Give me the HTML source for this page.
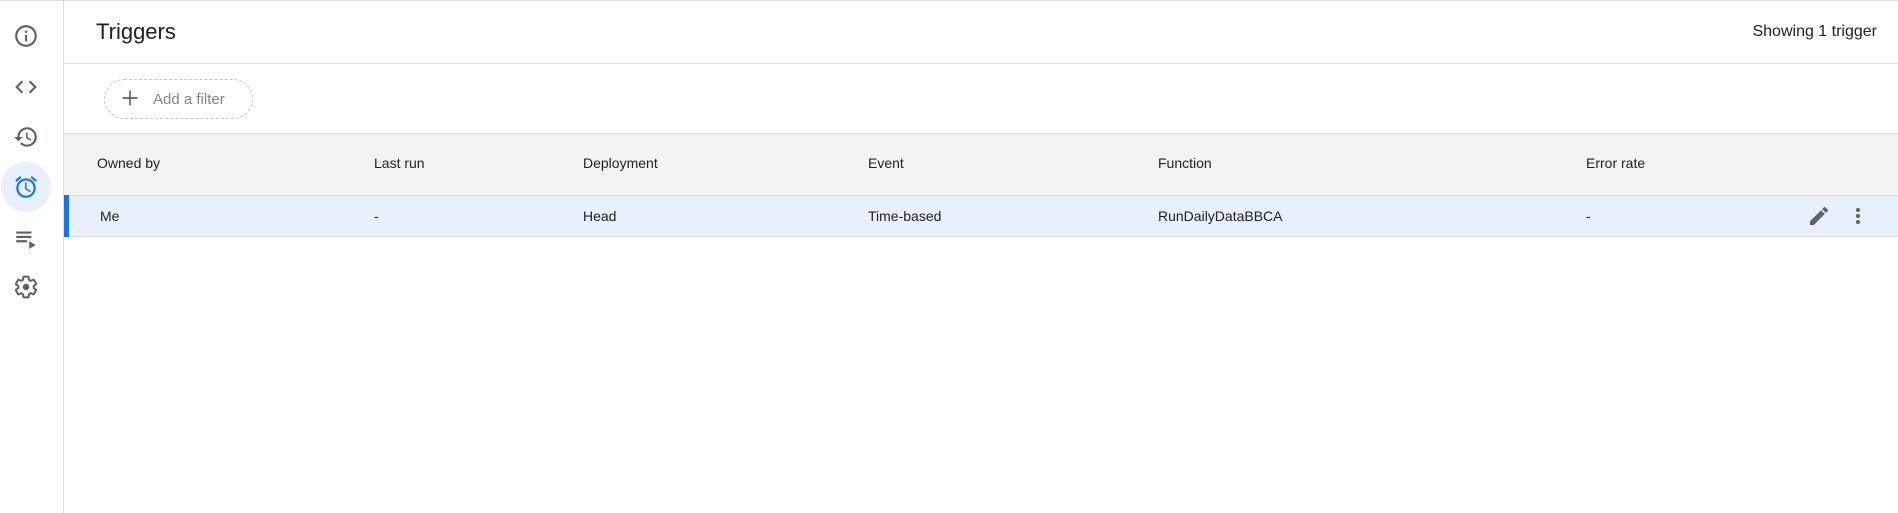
<!DOCTYPE html>
<html><head><style>
body{margin:0;width:1898px;height:513px;background:#fff;font-family:"Liberation Sans",sans-serif;position:relative;overflow:hidden;color:#202124}
.a{position:absolute}
svg.i{position:absolute;width:26px;height:26px;fill:#5f6368}
.h{position:absolute;top:155px;font-size:14px;color:#202124}
.r{position:absolute;top:208px;font-size:14px;color:#202124}
</style></head><body>
<div class="a" style="left:0;top:0;width:1898px;height:1px;background:#dadce0"></div>
<div class="a" style="left:63px;top:0;width:1px;height:513px;background:#dadce0"></div>
<div class="a" style="left:1px;top:162px;width:50px;height:50px;border-radius:50%;background:#e8f0fe"></div>
<svg class="i" style="left:13px;top:23px" viewBox="0 0 24 24"><path d="M11 7h2v2h-2zm0 4h2v6h-2zm1-9C6.48 2 2 6.48 2 12s4.48 10 10 10 10-4.48 10-10S17.52 2 12 2zm0 18c-4.41 0-8-3.59-8-8s3.59-8 8-8 8 3.59 8 8-3.59 8-8 8z"/></svg>
<svg class="i" style="left:13px;top:74px" viewBox="0 0 24 24"><path d="M9.4 16.6L4.8 12l4.6-4.6L8 6l-6 6 6 6 1.4-1.4zm5.2 0l4.6-4.6-4.6-4.6L16 6l6 6-6 6-1.4-1.4z"/></svg>
<svg class="i" style="left:13px;top:124px" viewBox="0 0 24 24"><path d="M13 3a9 9 0 0 0-9 9H1l3.89 3.89.07.14L9 12H6c0-3.87 3.13-7 7-7s7 3.13 7 7-3.13 7-7 7c-1.93 0-3.68-.79-4.94-2.06l-1.42 1.42A8.954 8.954 0 0 0 13 21a9 9 0 0 0 0-18zm-1 5v5l4.28 2.54.72-1.21-3.5-2.08V8H12z"/></svg>
<svg class="i" style="left:13px;top:174px;fill:#1a73e8" viewBox="0 0 24 24"><path d="M22 5.72l-4.6-3.86-1.29 1.53 4.6 3.86L22 5.72zM7.88 3.39L6.6 1.86 2 5.71l1.29 1.53 4.59-3.85zM12.5 8H11v6l4.75 2.85.75-1.23-4-2.37V8zM12 4c-4.97 0-9 4.03-9 9s4.02 9 9 9a9 9 0 0 0 0-18zm0 16c-3.87 0-7-3.13-7-7s3.13-7 7-7 7 3.13 7 7-3.13 7-7 7z"/></svg>
<svg class="i" style="left:13px;top:225px" viewBox="0 0 24 24"><path d="M3 6h14v2H3zm0 4h14v2H3zm0 4h10v2H3zm12 1l6 3.5-6 3.5z"/></svg>
<svg class="i" style="left:13px;top:274px" viewBox="0 0 24 24"><path d="M19.14 12.94c.04-.3.06-.61.06-.94 0-.32-.02-.64-.07-.94l2.03-1.58a.49.49 0 0 0 .12-.61l-1.92-3.32a.488.488 0 0 0-.59-.22l-2.39.96c-.5-.38-1.03-.7-1.62-.94l-.36-2.54a.484.484 0 0 0-.48-.41h-3.84c-.24 0-.43.17-.47.41l-.36 2.54c-.59.24-1.13.57-1.62.94l-2.39-.96c-.22-.08-.47 0-.59.22L2.74 8.87c-.12.21-.08.47.12.61l2.03 1.58c-.05.3-.09.63-.09.94s.02.64.07.94l-2.03 1.58a.49.49 0 0 0-.12.61l1.92 3.32c.12.22.37.29.59.22l2.39-.96c.5.38 1.03.7 1.62.94l.36 2.54c.05.24.24.41.48.41h3.84c.24 0 .44-.17.47-.41l.36-2.54c.59-.24 1.13-.56 1.62-.94l2.39.96c.22.08.47 0 .59-.22l1.92-3.32c.12-.22.07-.47-.12-.61l-2.01-1.58z" fill="none" stroke="#5f6368" stroke-width="1.9" stroke-linejoin="round"/><circle cx="12" cy="12" r="3" fill="#5f6368"/></svg>

<div class="a" style="left:96px;top:19px;font-size:22px;color:#202124">Triggers</div>
<div class="a" style="right:21px;top:23px;font-size:16px;color:#202124">Showing 1 trigger</div>
<div class="a" style="left:64px;top:63px;width:1834px;height:1px;background:#dadce0"></div>
<div class="a" style="left:104px;top:79px;width:147px;height:38px;border:1px dashed #c4c7c5;border-radius:20px"></div>
<svg class="a" style="left:120px;top:88px;width:20px;height:20px" viewBox="0 0 24 24"><path d="M11 3h2v8h8v2h-8v8h-2v-8H3v-2h8z" fill="#5f6368"/></svg>
<div class="a" style="left:153px;top:91px;font-size:15px;color:#80868b">Add a filter</div>

<div class="a" style="left:64px;top:133px;width:1834px;height:62px;background:#f3f3f3;border-top:1px solid #dadce0;box-sizing:border-box"></div>
<div class="a" style="left:64px;top:195px;width:1834px;height:42px;background:#e8f0fc;border-top:1px solid #dadce0;border-bottom:1px solid #dadce0;box-sizing:border-box"></div>
<div class="a" style="left:64px;top:195px;width:5px;height:42px;background:#1a73e8"></div>

<div class="h" style="left:97px">Owned by</div>
<div class="h" style="left:374px">Last run</div>
<div class="h" style="left:583px">Deployment</div>
<div class="h" style="left:868px">Event</div>
<div class="h" style="left:1158px">Function</div>
<div class="h" style="left:1586px">Error rate</div>

<div class="r" style="left:100px">Me</div>
<div class="r" style="left:374px">-</div>
<div class="r" style="left:583px">Head</div>
<div class="r" style="left:868px">Time-based</div>
<div class="r" style="left:1158px">RunDailyDataBBCA</div>
<div class="r" style="left:1586px">-</div>
<svg class="a" style="left:1807px;top:204px;width:24px;height:24px" viewBox="0 0 24 24"><path d="M3 17.25V21h3.75L17.81 9.94l-3.75-3.75L3 17.25zM20.71 7.04a1 1 0 0 0 0-1.41l-2.34-2.34a1 1 0 0 0-1.41 0l-1.83 1.830 3.75 3.75 1.83-1.83z" fill="#5f6368"/></svg>
<svg class="a" style="left:1846px;top:204px;width:24px;height:24px" viewBox="0 0 24 24"><path d="M12 8a2 2 0 1 0 0-4 2 2 0 0 0 0 4zm0 2a2 2 0 1 0 0 4 2 2 0 0 0 0-4zm0 6a2 2 0 1 0 0 4 2 2 0 0 0 0-4z" fill="#5f6368"/></svg>
</body></html>
